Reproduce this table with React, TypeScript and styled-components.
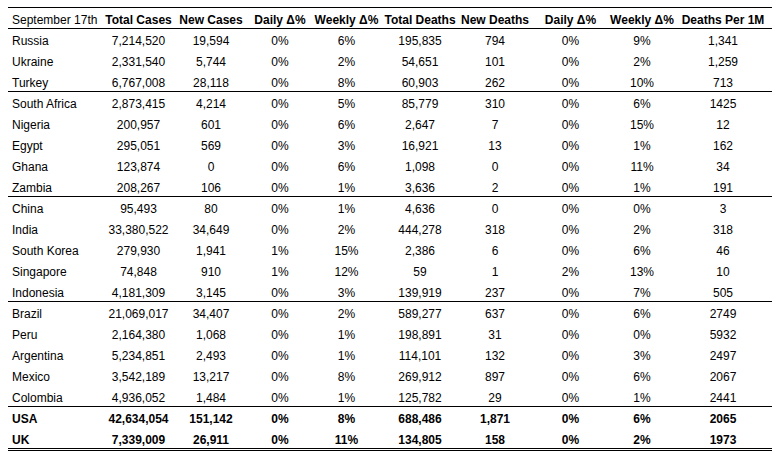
import React from "react";
import styled, { createGlobalStyle } from "styled-components";

const GlobalStyle = createGlobalStyle`
  html, body { margin: 0; padding: 0; background: #ffffff; }
  body { font-family: "Liberation Sans", Arial, sans-serif; color: #000; }
`;

const COLS = "95px 71px 74px 64px 69px 78px 72px 79px 64px 98px";

const Page = styled.div`
  padding: 7px 6px 0 8px;
`;

const Table = styled.div`
  width: 764px;
  border-top: 1px solid #000;
  display: flex;
  flex-direction: column;
`;

const Row = styled.div<{ $sep?: "single" | "double"; $bold?: boolean; $header?: boolean }>`
  display: grid;
  grid-template-columns: ${COLS};
  height: ${(p) => (p.$sep === "double" ? "23px" : "21px")};
  box-sizing: border-box;
  border-bottom: ${(p) =>
    p.$sep === "double" ? "3px double #000" : p.$sep === "single" ? "1px solid #000" : "none"};
  font-size: 12px;
  line-height: 14px;
  font-weight: ${(p) => (p.$bold ? 700 : 400)};
`;

const Cell = styled.div<{ $left?: boolean; $bold?: boolean }>`
  display: flex;
  align-items: center;
  justify-content: ${(p) => (p.$left ? "flex-start" : "center")};
  padding: 3px 0 0 ${(p) => (p.$left ? "4px" : "0")};
  white-space: nowrap;
  font-weight: ${(p) => (p.$bold ? 700 : "inherit")};
`;

const headers = [
  "Total Cases",
  "New Cases",
  "Daily Δ%",
  "Weekly Δ%",
  "Total Deaths",
  "New Deaths",
  "Daily Δ%",
  "Weekly Δ%",
  "Deaths Per 1M",
];

type R = { v: string[]; sep?: "single" | "double"; bold?: boolean };

const rows: R[] = [
  { v: ["Russia", "7,214,520", "19,594", "0%", "6%", "195,835", "794", "0%", "9%", "1,341"] },
  { v: ["Ukraine", "2,331,540", "5,744", "0%", "2%", "54,651", "101", "0%", "2%", "1,259"] },
  { v: ["Turkey", "6,767,008", "28,118", "0%", "8%", "60,903", "262", "0%", "10%", "713"], sep: "single" },
  { v: ["South Africa", "2,873,415", "4,214", "0%", "5%", "85,779", "310", "0%", "6%", "1425"] },
  { v: ["Nigeria", "200,957", "601", "0%", "6%", "2,647", "7", "0%", "15%", "12"] },
  { v: ["Egypt", "295,051", "569", "0%", "3%", "16,921", "13", "0%", "1%", "162"] },
  { v: ["Ghana", "123,874", "0", "0%", "6%", "1,098", "0", "0%", "11%", "34"] },
  { v: ["Zambia", "208,267", "106", "0%", "1%", "3,636", "2", "0%", "1%", "191"], sep: "single" },
  { v: ["China", "95,493", "80", "0%", "1%", "4,636", "0", "0%", "0%", "3"] },
  { v: ["India", "33,380,522", "34,649", "0%", "2%", "444,278", "318", "0%", "2%", "318"] },
  { v: ["South Korea", "279,930", "1,941", "1%", "15%", "2,386", "6", "0%", "6%", "46"] },
  { v: ["Singapore", "74,848", "910", "1%", "12%", "59", "1", "2%", "13%", "10"] },
  { v: ["Indonesia", "4,181,309", "3,145", "0%", "3%", "139,919", "237", "0%", "7%", "505"], sep: "single" },
  { v: ["Brazil", "21,069,017", "34,407", "0%", "2%", "589,277", "637", "0%", "6%", "2749"] },
  { v: ["Peru", "2,164,380", "1,068", "0%", "1%", "198,891", "31", "0%", "0%", "5932"] },
  { v: ["Argentina", "5,234,851", "2,493", "0%", "1%", "114,101", "132", "0%", "3%", "2497"] },
  { v: ["Mexico", "3,542,189", "13,217", "0%", "8%", "269,912", "897", "0%", "6%", "2067"] },
  { v: ["Colombia", "4,936,052", "1,484", "0%", "1%", "125,782", "29", "0%", "1%", "2441"], sep: "single" },
  { v: ["USA", "42,634,054", "151,142", "0%", "8%", "688,486", "1,871", "0%", "6%", "2065"], bold: true },
  { v: ["UK", "7,339,009", "26,911", "0%", "11%", "134,805", "158", "0%", "2%", "1973"], bold: true, sep: "double" },
];

export default function App() {
  return (
    <>
      <GlobalStyle />
      <Page>
        <Table>
          <Row $sep="single">
            <Cell $left>September 17th</Cell>
            {headers.map((h, i) => (
              <Cell key={i} $bold>
                {h}
              </Cell>
            ))}
          </Row>
          {rows.map((r, i) => (
            <Row key={i} $sep={r.sep} $bold={r.bold}>
              {r.v.map((c, j) => (
                <Cell key={j} $left={j === 0}>
                  {c}
                </Cell>
              ))}
            </Row>
          ))}
        </Table>
      </Page>
    </>
  );
}
